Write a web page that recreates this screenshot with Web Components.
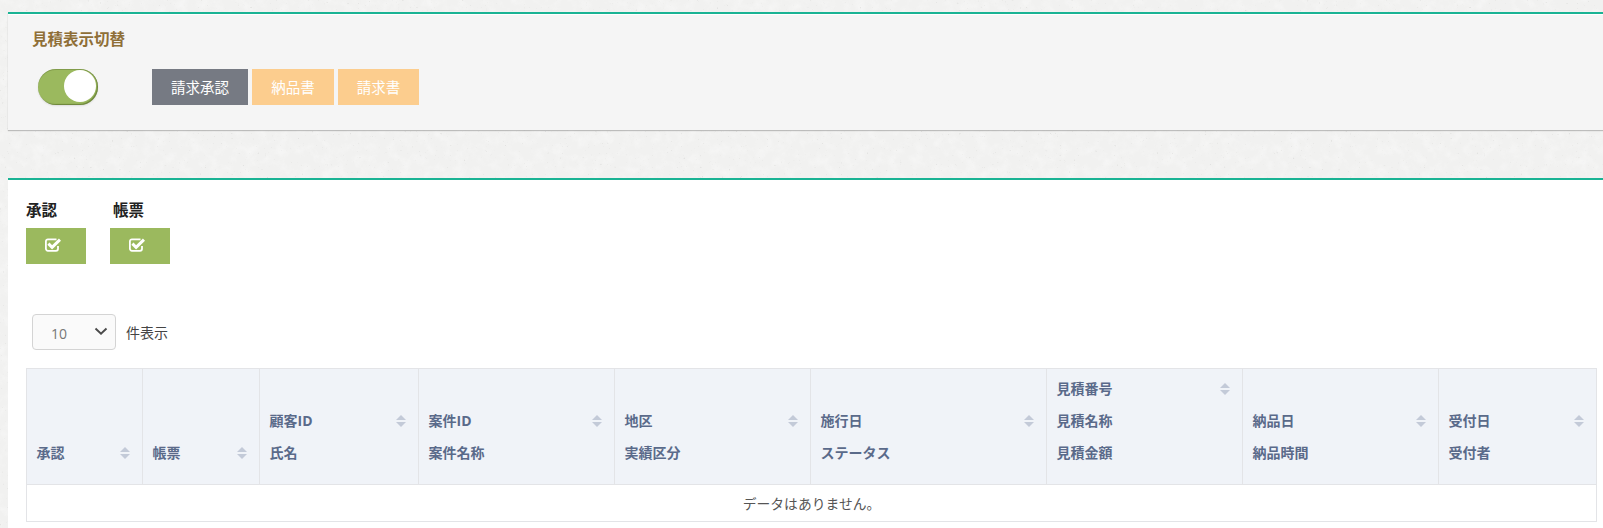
<!DOCTYPE html>
<html lang="ja">
<head>
<meta charset="utf-8">
<title>見積表示切替</title>
<style>
  html, body { margin: 0; height: 528px; overflow: hidden; background: #f1f1f0; }
  body { font-family: "Open Sans", "Noto Sans CJK JP", sans-serif; padding: 12px 0 0 8px; box-sizing: border-box; position: relative; }
  .paper { position: absolute; left: 0; top: 0; width: 1603px; height: 528px; }
  .stack { position: relative; display: flex; flex-direction: column; gap: 48px; }
</style>
</head>
<body>
<!-- paper texture behind everything -->
<svg class="paper" aria-hidden="true">
  <filter id="blotch" x="0" y="0" width="100%" height="100%">
    <feTurbulence type="fractalNoise" baseFrequency="0.09" numOctaves="3" seed="7"/>
    <feColorMatrix values="0 0 0 0 1  0 0 0 0 1  0 0 0 0 1  2.2 0 0 0 -0.95"/>
  </filter>
  <filter id="specks" x="0" y="0" width="100%" height="100%">
    <feTurbulence type="fractalNoise" baseFrequency="0.42" numOctaves="2" seed="11"/>
    <feColorMatrix values="0 0 0 0 0.62  0 0 0 0 0.62  0 0 0 0 0.6  7 0 0 0 -5.1"/>
  </filter>
  <rect width="1603" height="528" filter="url(#blotch)" opacity=".35"/>
  <rect width="1603" height="528" filter="url(#specks)" opacity=".4"/>
</svg>

<div class="stack">
  <switch-panel>
    <span slot="title">見積表示切替</span>
    <toggle-switch></toggle-switch>
    <tab-button kind="active" width="96">請求承認</tab-button>
    <tab-button width="82">納品書</tab-button>
    <tab-button width="81">請求書</tab-button>
  </switch-panel>

  <list-panel>
    <check-action label="承認"></check-action>
    <check-action label="帳票" indent="3"></check-action>
    <page-size slot="size"></page-size>
    <data-table slot="table"></data-table>
  </list-panel>
</div>

<script>
class SwitchPanel extends HTMLElement {
  constructor() {
    super();
    this.attachShadow({ mode: "open" }).innerHTML = `
    <style>
      :host { display: block; height: 118px; box-sizing: border-box; background: #f5f5f5;
        border-top: 2px solid #1ab394; box-shadow: inset 0 1px 0 #fff, 0 1px 1px rgba(0,0,0,.22); padding: 15px 0 0 24px; }
      .title { font-size: 15.5px; line-height: 20px; font-weight: 700; color: #8f6f37; }
      .row { display: flex; gap: 4px; margin-top: 20px; padding-left: 6px; }
    </style>
    <div class="title"><slot name="title"></slot></div>
    <div class="row"><slot></slot></div>`;
  }
}

class ToggleSwitch extends HTMLElement {
  constructor() {
    super();
    this.attachShadow({ mode: "open" }).innerHTML = `
    <style>
      :host { display: block; width: 60px; height: 36px; margin-right: 50px; box-sizing: border-box;
        border-radius: 18px; background: #9bb95e; box-shadow: inset -1px -1px 1px rgba(70,90,30,.55), inset 0 1px 0 rgba(70,90,30,.3), 0 1px 2px rgba(0,0,0,.1); position: relative; }
      i { position: absolute; left: 26px; top: 1px; width: 32px; height: 32px; border-radius: 50%; background: #fff; }
    </style>
    <i></i>`;
  }
}

class TabButton extends HTMLElement {
  constructor() {
    super();
    const w = this.getAttribute("width");
    const active = this.getAttribute("kind") === "active";
    this.attachShadow({ mode: "open" }).innerHTML = `
    <style>
      :host { display: flex; align-items: center; justify-content: center; height: 36px; padding-bottom: 2px; box-sizing: border-box;
        width: ${w}px; background: ${active ? "#767a83" : "#fccd8e"}; color: #fff; font-size: 14.5px; }
    </style>
    <slot></slot>`;
  }
}

class ListPanel extends HTMLElement {
  constructor() {
    super();
    this.attachShadow({ mode: "open" }).innerHTML = `
    <style>
      :host { display: block; height: 350px; box-sizing: border-box; background: #fff;
        border-top: 2px solid #1ab394; padding: 20px 0 0 18px; }
      .actions { display: flex; gap: 24px; }
      .size { margin: 50px 0 0 6px; }
      .table { margin-top: 18px; }
    </style>
    <div class="actions"><slot></slot></div>
    <div class="size"><slot name="size"></slot></div>
    <div class="table"><slot name="table"></slot></div>`;
  }
}

class CheckAction extends HTMLElement {
  constructor() {
    super();
    const indent = this.getAttribute("indent") || 0;
    this.attachShadow({ mode: "open" }).innerHTML = `
    <style>
      :host { display: block; width: 60px; }
      .label { font-size: 15.5px; line-height: 20px; font-weight: 700; color: #222; margin-bottom: 8px; padding-left: ${indent}px; white-space: nowrap; }
      .btn { height: 36px; background: #9bb95e; display: flex; padding: 10px 0 0 19px; box-sizing: border-box; }
      svg { width: 16px; height: 14px; }
    </style>
    <div class="label">${this.getAttribute("label")}</div>
    <div class="btn">
      <svg viewBox="0 0 16 14" fill="none" stroke="#fff">
        <path d="M13 8V10.8A2 2 0 0 1 11 12.8H2.9A2 2 0 0 1 .9 10.8V3.4A2 2 0 0 1 2.9 1.4H11.5" stroke-width="1.8"/>
        <path d="M3.4 5.6L7.1 9.3L15 1.6" stroke-width="3"/>
      </svg>
    </div>`;
  }
}

class PageSize extends HTMLElement {
  constructor() {
    super();
    this.attachShadow({ mode: "open" }).innerHTML = `
    <style>
      :host { display: flex; align-items: center; gap: 10px; font-size: 14px; color: #444; }
      .box { width: 84px; height: 36px; box-sizing: border-box; border: 1px solid #d4d4d4; border-radius: 4px;
        background: #fafafa; display: flex; align-items: center; justify-content: space-between; padding: 2px 7px 0 18px; color: #777; font-size: 14px; }
      svg { width: 14px; height: 9px; margin-top: -3px; }
    </style>
    <div class="box"><span>10</span>
      <svg viewBox="0 0 14 9" fill="none" stroke="#4a4a4a" stroke-width="1.9"><path d="M1.5 1.5L7 6.8L12.5 1.5"/></svg>
    </div>
    <span>件表示</span>`;
  }
}

const COLUMNS = [
  { w: 116, lines: ["承認"] },
  { w: 117, lines: ["帳票"] },
  { w: 159, lines: ["顧客ID", "氏名"] },
  { w: 196, lines: ["案件ID", "案件名称"] },
  { w: 196, lines: ["地区", "実績区分"] },
  { w: 236, lines: ["施行日", "ステータス"] },
  { w: 196, lines: ["見積番号", "見積名称", "見積金額"] },
  { w: 196, lines: ["納品日", "納品時間"] },
  { w: 158, lines: ["受付日", "受付者"] }
];

class DataTable extends HTMLElement {
  constructor() {
    super();
    const sort = `<svg class="sort" viewBox="0 0 10 12" fill="#c3cad8"><path d="M5 0L10 5H0Z"/><path d="M5 12L0 7H10Z"/></svg>`;
    const cols = COLUMNS.map(c => `<col style="width:${c.w}px">`).join("");
    const heads = COLUMNS.map(c => `<th><div class="cell">${sort}${c.lines.map(l => `<div>${l}</div>`).join("")}</div></th>`).join("");
    this.attachShadow({ mode: "open" }).innerHTML = `
    <style>
      :host { display: block; width: 1570px; position: relative; font-size: 14px; }
      table { border-collapse: collapse; table-layout: fixed; width: 1570px; margin-top: 1px; }
      th, td { border: 1px solid #e3e4e7; padding: 0; }
      th { background: #f0f3f8; height: 115px; vertical-align: bottom; text-align: left; color: #5a6a8a; font-weight: 700; }
      .cell { position: relative; padding: 0 10px 15px 9.5px; line-height: 32px; }
      .sort { position: absolute; right: 12px; top: 10px; width: 10px; height: 12px; }
      td { height: 36px; text-align: center; color: #555; font-size: 13.8px; }
      .edge { position: absolute; left: 0; top: 0; width: 785px; height: 1px; background: #e3e4e7; }
    </style>
    <div class="edge"></div>
    <table>
      <colgroup>${cols}</colgroup>
      <tr>${heads}</tr>
      <tr><td colspan="${COLUMNS.length}">データはありません。</td></tr>
    </table>`;
  }
}

customElements.define("switch-panel", SwitchPanel);
customElements.define("toggle-switch", ToggleSwitch);
customElements.define("tab-button", TabButton);
customElements.define("list-panel", ListPanel);
customElements.define("check-action", CheckAction);
customElements.define("page-size", PageSize);
customElements.define("data-table", DataTable);
</script>
</body>
</html>
